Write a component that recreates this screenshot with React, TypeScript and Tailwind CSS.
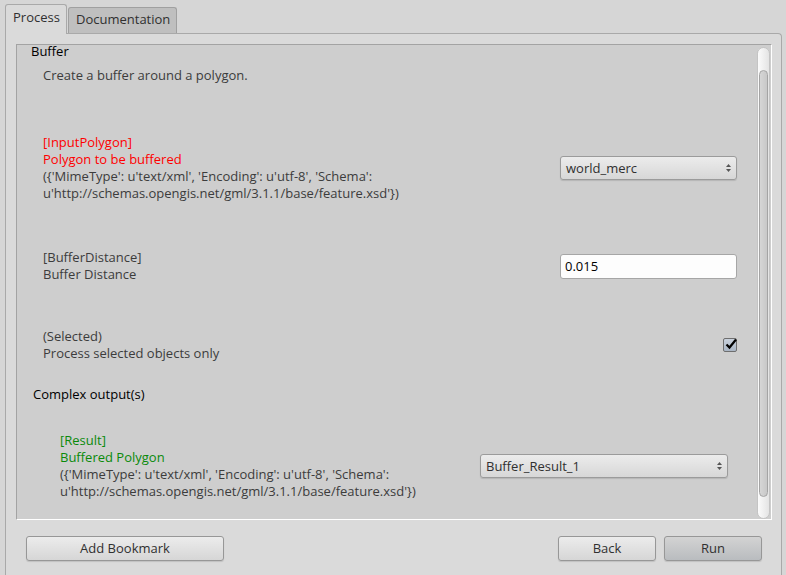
const label = 'text-[#3c3c3c]';

function Combo({ value, width }: { value: string; width: string }) {
  return (
    <div
      className={`flex h-[24px] ${width} items-center justify-between rounded-[3px] border border-[#9b9b9b] bg-gradient-to-b from-[#ececec] to-[#d7d7d7] pl-[5px] pr-[4px] shadow-[0_1px_1px_rgba(0,0,0,0.12)]`}
    >
      <span className="text-[#303030]">{value}</span>
      <svg width="7" height="12" viewBox="0 0 7 12" className="text-[#555]">
        <path d="M3.5 2 L6 5 L1 5 Z" fill="currentColor" />
        <path d="M1 7 L6 7 L3.5 10 Z" fill="currentColor" />
      </svg>
    </div>
  );
}

function Button({ text, width, dark }: { text: string; width: string; dark?: boolean }) {
  return (
    <div
      className={`flex h-[25px] ${width} items-center justify-center rounded-[3px] border border-[#979797] text-[#303030] shadow-[0_1px_1px_rgba(0,0,0,0.12)] ${
        dark ? 'bg-gradient-to-b from-[#d3d3d3] to-[#b9bcbf]' : 'bg-gradient-to-b from-[#ececec] to-[#d6d6d6]'
      }`}
    >
      {text}
    </div>
  );
}

export default function App() {
  return (
    <div
      className="h-[575px] w-[786px] overflow-hidden bg-[#d6d6d6] text-[13px] leading-[17px]"
      style={{ fontFamily: '"Open Sans", "Noto Sans", sans-serif' }}
    >
      {/* tabs */}
      <div className="relative z-10 flex h-[33px] items-end pl-[5px]">
        <div className="-mb-px h-[30px] w-[62px] rounded-t-[3px] border border-b-0 border-[#a9a9a9] bg-[#dadada] pl-[7px] pt-[4px] text-[#303030]">
          Process
        </div>
        <div className="ml-px h-[26px] w-[109px] rounded-t-[3px] border border-b-0 border-[#a0a0a0] bg-[#bfbfbf] pl-[7px] pt-[3px] text-[#303030]">
          Documentation
        </div>
      </div>

      {/* pane */}
      <div className="ml-[5px] mr-[4px] h-[560px] rounded-tr-[4px] border border-b-0 border-[#a9a9a9] bg-[#dadada] pl-[10px] pr-[9px] pt-[10px]">
        <div className="flex h-[476px] border border-b-white border-l-[#a3a3a3] border-r-white border-t-[#a3a3a3] bg-[#cecece]">
          <div className="min-w-0 flex-1">
            <div className="-mt-[2px] pl-[14px] text-black">Buffer</div>
            <div className={`mt-[7px] pl-[26px] ${label}`}>Create a buffer around a polygon.</div>

            <div className="mt-[50px] flex items-center justify-between pl-[26px] pr-[20px]">
              <div className="whitespace-nowrap">
                <div className="text-[#ff0000]">[InputPolygon]</div>
                <div className="text-[#ff0000]">Polygon to be buffered</div>
                <div className={label}>({"{"}'MimeType': u'text/xml', 'Encoding': u'utf-8', 'Schema':</div>
                <div className={label}>u'http://schemas.opengis.net/gml/3.1.1/base/feature.xsd'{"}"})</div>
              </div>
              <Combo value="world_merc" width="w-[177px]" />
            </div>

            <div className="mt-[47px] flex items-center justify-between pl-[26px] pr-[20px]">
              <div className={`whitespace-nowrap ${label}`}>
                <div>[BufferDistance]</div>
                <div>Buffer Distance</div>
              </div>
              <div className="flex h-[25px] w-[177px] items-center rounded-[3px] border border-[#a6a6a6] bg-[#fdfdfd] pl-[4px] text-black">
                0.015
              </div>
            </div>

            <div className="mt-[45px] flex items-center justify-between pl-[26px] pr-[20px]">
              <div className={`whitespace-nowrap ${label}`}>
                <div>(Selected)</div>
                <div>Process selected objects only</div>
              </div>
              <div className="relative h-[14px] w-[14px] rounded-[2px] border border-[#6e6e6e] bg-gradient-to-b from-[#c9d1dc] to-[#a9b5c4]">
                <svg width="14" height="14" viewBox="0 0 14 14" className="absolute -top-[2px] left-0">
                  <path d="M2.5 7.5 L5.5 10.5 L12 2.5" fill="none" stroke="#000" strokeWidth="2.2" />
                </svg>
              </div>
            </div>

            <div className="mt-[24px] pl-[16px] text-black">Complex output(s)</div>

            <div className="mt-[29px] flex items-center justify-between pl-[43px] pr-[29px]">
              <div className="whitespace-nowrap">
                <div className="text-[#0a8a0a]">[Result]</div>
                <div className="text-[#0a8a0a]">Buffered Polygon</div>
                <div className={label}>({"{"}'MimeType': u'text/xml', 'Encoding': u'utf-8', 'Schema':</div>
                <div className={label}>u'http://schemas.opengis.net/gml/3.1.1/base/feature.xsd'{"}"})</div>
              </div>
              <Combo value="Buffer_Result_1" width="w-[248px]" />
            </div>
          </div>

          {/* scrollbar */}
          <div className="mr-px mt-[2px] flex w-[13px] flex-col rounded-full border border-[#c4c4c4] bg-gradient-to-r from-[#fbfbfb] to-[#e4e4e4] px-[1px] pb-[21px] pt-[22px]">
            <div className="flex-1 rounded-full border border-[#a4a4a4] bg-gradient-to-r from-[#d6d6d6] to-[#c8c8c8]" />
          </div>
        </div>

        <div className="mt-[16px] flex items-center justify-between pl-[10px] pr-[10px]">
          <Button text="Add Bookmark" width="w-[198px]" />
          <div className="flex gap-[8px]">
            <Button text="Back" width="w-[98px]" />
            <Button text="Run" width="w-[98px]" dark />
          </div>
        </div>
      </div>
    </div>
  );
}
